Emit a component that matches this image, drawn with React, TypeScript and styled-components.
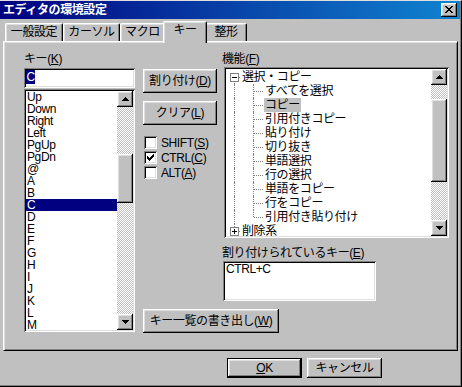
import styled, { createGlobalStyle, css } from "styled-components";

const GlobalStyle = createGlobalStyle`
  * { box-sizing: border-box; }
  body { margin: 0; background: #c0c0c0; }
`;

const KEYS = ["Up", "Down", "Right", "Left", "PgUp", "PgDn", "@", "A", "B", "C", "D", "E", "F", "G", "H", "I", "J", "K", "L", "M"];
const COPY_ITEMS = ["すべてを選択", "コピー", "引用付きコピー", "貼り付け", "切り抜き", "単語選択", "行の選択", "単語をコピー", "行をコピー", "引用付き貼り付け"];
const TABS = [
	{ label: "一般設定", w: 58 },
	{ label: "カーソル", w: 57 },
	{ label: "マクロ", w: 45 },
	{ label: "キー", w: 40 },
	{ label: "整形", w: 42 },
];

const raised = css`
	background: #c0c0c0;
	box-shadow: inset -1px -1px #000, inset 1px 1px #fff, inset -2px -2px #808080, inset 2px 2px #dfdfdf;
`;

const sunken = css`
	background: #fff;
	padding: 2px;
	box-shadow: inset 1px 1px #808080, inset -1px -1px #fff, inset 2px 2px #000, inset -2px -2px #dfdfdf;
`;

function App() {
	return (
		<>
			<GlobalStyle />
			<Window>
				<TitleBar>
					<Title>エディタの環境設定</Title>
					<CloseButton>
						<svg width="8" height="7" viewBox="0 0 8 7">
							<path d="M0 0h2v1H0zM6 0h2v1H6zM1 1h2v1H1zM5 1h2v1H5zM2 2h4v1H2zM3 3h2v1H3zM2 4h4v1H2zM1 5h2v1H1zM5 5h2v1H5zM0 6h2v1H0zM6 6h2v1H6z" fill="#000" />
						</svg>
					</CloseButton>
				</TitleBar>

				<TabStrip>
					{TABS.map((t, i) => (
						<Tab key={t.label} $w={t.w} $active={i === 3}>
							{t.label}
						</Tab>
					))}
				</TabStrip>

				<Panel>
					<KeyColumn>
						<Label>
							キー(<U>K</U>)
						</Label>
						<EditBox>
							<SelText>C</SelText>
						</EditBox>
						<KeyList>
							<ListBody>
								{KEYS.map((k) => (
									<ListItem key={k} $selected={k === "C"}>
										{k}
									</ListItem>
								))}
							</ListBody>
							<ScrollBar before={47} thumb={49} />
						</KeyList>
					</KeyColumn>

					<RightArea>
						<TopRow>
							<ButtonColumn>
								<PushButton $w={74}>
									<span>
										割り付け(<U>D</U>)
									</span>
								</PushButton>
								<PushButton $w={74}>
									<span>
										クリア(<U>L</U>)
									</span>
								</PushButton>
								<Checks>
									<CheckRow>
										<CheckBox />
										<span>
											SHIFT(<U>S</U>)
										</span>
									</CheckRow>
									<CheckRow>
										<CheckBox>
											<svg width="7" height="7" viewBox="0 0 7 7">
												<path d="M6 0h1v1H6zM5 1h2v1H5zM0 2h1v1H0zM4 2h3v1H4zM0 3h2v1H0zM3 3h3v1H3zM0 4h5v1H0zM1 5h3v1H1zM2 6h1v1H2z" fill="#000" />
											</svg>
										</CheckBox>
										<span>
											CTRL(<U>C</U>)
										</span>
									</CheckRow>
									<CheckRow>
										<CheckBox />
										<span>
											ALT(<U>A</U>)
										</span>
									</CheckRow>
								</Checks>
							</ButtonColumn>

							<FuncColumn>
								<Label>
									機能(<U>F</U>)
								</Label>
								<TreeBox>
									<TreeBody>
										<TreeRow>
											<Connector $w={15} $x={8} $vert="bottom" $horiz>
												<Expander open />
											</Connector>
											<NodeLabel>選択・コピー</NodeLabel>
										</TreeRow>
										{COPY_ITEMS.map((item, i) => (
											<TreeRow key={item}>
												<Connector $w={15} $x={8} $vert="full" />
												<Connector $w={23} $x={12} $vert={i === COPY_ITEMS.length - 1 ? "top" : "full"} $horiz />
												<NodeLabel $selected={item === "コピー"}>{item}</NodeLabel>
											</TreeRow>
										))}
										<TreeRow>
											<Connector $w={15} $x={8} $vert="top" $horiz>
												<Expander />
											</Connector>
											<NodeLabel>削除系</NodeLabel>
										</TreeRow>
									</TreeBody>
									<ScrollBar before={14} thumb={83} />
								</TreeBox>
								<AssignedLabel>
									割り付けられているキー(<U>E</U>)
								</AssignedLabel>
								<AssignedBox>CTRL+C</AssignedBox>
							</FuncColumn>
						</TopRow>
						<ExportButton $w={136}>
							<span>
								キー一覧の書き出し(<U>W</U>)
							</span>
						</ExportButton>
					</RightArea>
				</Panel>

				<Footer>
					<PushButton $w={75} $h={20} $default>
						<span>
							<U>O</U>K
						</span>
					</PushButton>
					<PushButton $w={75} $h={20}>
						キャンセル
					</PushButton>
				</Footer>
			</Window>
		</>
	);
}

function ScrollBar({ before, thumb }: { before: number; thumb: number }) {
	return (
		<Track>
			<ArrowButton>
				<svg width="7" height="4" viewBox="0 0 7 4">
					<path d="M3 0h1v1H3zM2 1h3v1H2zM1 2h5v1H1zM0 3h7v1H0z" fill="#000" />
				</svg>
			</ArrowButton>
			<TrackSpace $h={before} />
			<Thumb $h={thumb} />
			<TrackSpace />
			<ArrowButton>
				<svg width="7" height="4" viewBox="0 0 7 4">
					<path d="M0 0h7v1H0zM1 1h5v1H1zM2 2h3v1H2zM3 3h1v1H3z" fill="#000" />
				</svg>
			</ArrowButton>
		</Track>
	);
}

function Expander({ open }: { open?: boolean }) {
	return (
		<ExpanderIcon width="9" height="9" viewBox="0 0 9 9">
			<rect x="0.5" y="0.5" width="8" height="8" fill="#fff" stroke="#808080" />
			<path d={open ? "M2 4h5v1H2z" : "M2 4h5v1H2zM4 2h1v5H4z"} fill="#000" />
		</ExpanderIcon>
	);
}

const Window = styled.div`
	width: 462px;
	height: 387px;
	display: flex;
	flex-direction: column;
	padding: 0 1px 1px 0;
	overflow: hidden;
	background: #c0c0c0;
	border-top: 1px solid #dfdfdf;
	border-right: 1px solid #000;
	border-bottom: 1px solid #000;
	box-shadow: inset -1px -1px #808080;
	font-family: "Liberation Sans", "Noto Sans CJK JP", sans-serif;
	font-size: 12px;
	letter-spacing: -0.4px;
	color: #000;
`;

const TitleBar = styled.div`
	flex: none;
	height: 18px;
	display: flex;
	align-items: center;
	justify-content: space-between;
	padding: 0 3px;
	background: linear-gradient(90deg, #000080, #1084d0);
`;

const Title = styled.span`
	color: #fff;
	font-weight: bold;
	line-height: 16px;
`;

const CloseButton = styled.div`
	${raised};
	width: 16px;
	height: 14px;
	display: flex;
	align-items: center;
	justify-content: center;
	padding-bottom: 1px;
`;

const TabStrip = styled.div`
	flex: none;
	height: 20px;
	margin-top: 2px;
	padding-left: 5px;
	display: flex;
	align-items: flex-end;
	position: relative;
	z-index: 1;
`;

const Tab = styled.div<{ $w: number; $active?: boolean }>`
	width: ${(p) => (p.$active ? p.$w + 4 : p.$w)}px;
	height: ${(p) => (p.$active ? 22 : 18)}px;
	margin: ${(p) => (p.$active ? "0 -2px -2px" : "0")};
	position: relative;
	z-index: ${(p) => (p.$active ? 2 : 1)};
	display: flex;
	justify-content: center;
	padding-top: 1px;
	line-height: 14px;
	background: #c0c0c0;
	border-top: 1px solid #fff;
	border-left: 1px solid #fff;
	border-right: 1px solid #000;
	border-radius: 2px 2px 0 0;
	box-shadow: inset -1px 0 #808080, inset 1px 1px #dfdfdf;
`;

const Panel = styled.div`
	flex: none;
	width: 455px;
	height: 310px;
	margin-left: 3px;
	display: flex;
	gap: 8px;
	padding: 9px 0 0 20px;
	background: #c0c0c0;
	border-top: 1px solid #fff;
	border-left: 1px solid #fff;
	border-right: 1px solid #000;
	border-bottom: 1px solid #000;
	box-shadow: inset 1px 1px #dfdfdf, inset -1px -1px #808080;
`;

const Label = styled.div`
	line-height: 16px;
	height: 16px;
`;

const U = styled.span`
	text-decoration: underline;
	text-underline-offset: 1px;
`;

const KeyColumn = styled.div`
	width: 111px;
	display: flex;
	flex-direction: column;
`;

const EditBox = styled.div`
	${sunken};
	height: 20px;
	margin-top: 1px;
	display: flex;
	align-items: flex-start;
`;

const SelText = styled.span`
	background: #000080;
	color: #fff;
	line-height: 14px;
	padding: 0 0.5px;
`;

const KeyList = styled.div`
	${sunken};
	height: 243px;
	margin-top: 1px;
	display: flex;
`;

const ListBody = styled.div`
	flex: 1;
	min-width: 0;
	overflow: hidden;
`;

const ListItem = styled.div<{ $selected?: boolean }>`
	height: 12px;
	line-height: 12px;
	padding-left: 1px;
	background: ${(p) => (p.$selected ? "#000080" : "transparent")};
	color: ${(p) => (p.$selected ? "#fff" : "#000")};
`;

const Track = styled.div`
	flex: none;
	width: 16px;
	display: flex;
	flex-direction: column;
	background-color: #fff;
	background-image: repeating-conic-gradient(#c0c0c0 0 25%, #fff 0 50%);
	background-size: 2px 2px;
`;

const ArrowButton = styled.div`
	${raised};
	flex: none;
	height: 16px;
	display: flex;
	align-items: center;
	justify-content: center;
`;

const TrackSpace = styled.div<{ $h?: number }>`
	${(p) => (p.$h !== undefined ? `height: ${p.$h}px; flex: none;` : "flex: 1;")}
`;

const Thumb = styled.div<{ $h: number }>`
	${raised};
	flex: none;
	height: ${(p) => p.$h}px;
`;

const RightArea = styled.div`
	display: flex;
	flex-direction: column;
`;

const TopRow = styled.div`
	display: flex;
`;

const ButtonColumn = styled.div`
	width: 74px;
	padding-top: 18px;
	display: flex;
	flex-direction: column;
	gap: 8px;
`;

const PushButton = styled.button<{ $w: number; $h?: number; $default?: boolean }>`
	${raised};
	width: ${(p) => p.$w}px;
	height: ${(p) => p.$h ?? 24}px;
	border: ${(p) => (p.$default ? "1px solid #000" : "none")};
	padding: 0 0 1px;
	font: inherit;
	letter-spacing: inherit;
	line-height: 14px;
	color: #000;
	display: flex;
	align-items: center;
	justify-content: center;
`;

const ExportButton = styled(PushButton)`
	margin-top: 8px;
`;

const Checks = styled.div`
	margin-top: 2px;
	display: flex;
	flex-direction: column;
`;

const CheckRow = styled.div`
	height: 15px;
	display: flex;
	align-items: center;
	gap: 4px;
	padding-left: 1px;
	line-height: 14px;
`;

const CheckBox = styled.span`
	${sunken};
	width: 13px;
	height: 13px;
	flex: none;
	display: flex;
	align-items: center;
	justify-content: center;
`;

const FuncColumn = styled.div`
	width: 227px;
	margin-left: 5px;
	display: flex;
	flex-direction: column;
`;

const TreeBox = styled.div`
	${sunken};
	width: 225px;
	height: 171px;
	margin-left: 2px;
	display: flex;
`;

const TreeBody = styled.div`
	flex: 1;
	min-width: 0;
	padding-top: 1px;
	overflow: hidden;
`;

const TreeRow = styled.div`
	height: 14px;
	display: flex;
	align-items: center;
`;

const Connector = styled.span<{ $w: number; $x: number; $vert: "full" | "top" | "bottom"; $horiz?: boolean }>`
	position: relative;
	flex: none;
	width: ${(p) => p.$w}px;
	height: 14px;

	&::before {
		content: "";
		position: absolute;
		left: ${(p) => p.$x}px;
		top: ${(p) => (p.$vert === "bottom" ? 7 : 0)}px;
		height: ${(p) => (p.$vert === "full" ? 14 : 7)}px;
		border-left: 1px dotted #808080;
	}

	&::after {
		content: "";
		display: ${(p) => (p.$horiz ? "block" : "none")};
		position: absolute;
		left: ${(p) => p.$x + 1}px;
		top: 7px;
		width: ${(p) => p.$w - p.$x - 2}px;
		border-top: 1px dotted #808080;
	}
`;

const ExpanderIcon = styled.svg`
	position: absolute;
	left: 4px;
	top: 3px;
	z-index: 1;
`;

const NodeLabel = styled.span<{ $selected?: boolean }>`
	height: 14px;
	line-height: 14px;
	padding: 0 1px;
	white-space: nowrap;
	background: ${(p) => (p.$selected ? "#c0c0c0" : "transparent")};
`;

const AssignedLabel = styled(Label)`
	margin-top: 7px;
`;

const AssignedBox = styled.div`
	${sunken};
	width: 153px;
	height: 40px;
	margin-left: 1px;
	line-height: 13px;
	padding: 2px 2px 2px 3px;
`;

const Footer = styled.div`
	flex: none;
	margin-top: 7px;
	padding-left: 227px;
	display: flex;
	gap: 5px;
`;

export default App;
